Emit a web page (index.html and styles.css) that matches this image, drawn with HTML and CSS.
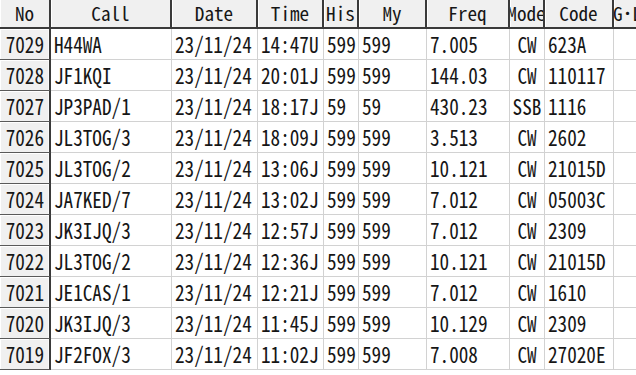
FILE: index.html
```html
<!DOCTYPE html>
<html lang="ja">
<head>
<meta charset="utf-8">
<title>Log</title>
<link rel="stylesheet" href="styles.css">
</head>
<body>
<div class="grid">
  <div class="th"><span>No</span></div><div class="th"><span>Call</span></div><div class="th"><span>Date</span></div><div class="th"><span>Time</span></div><div class="th"><span>His</span></div><div class="th"><span>My</span></div><div class="th"><span>Freq</span></div><div class="th clip"><span>Mode</span></div><div class="th"><span>Code</span></div><div class="th clip"><span>G･L</span></div>

  <div class="no"><span>7029</span></div><div class="td"><span>H44WA</span></div><div class="td"><span>23/11/24</span></div><div class="td"><span>14:47U</span></div><div class="td"><span>599</span></div><div class="td"><span>599</span></div><div class="td"><span>7.005</span></div><div class="td c"><span>CW</span></div><div class="td"><span>623A</span></div><div class="td"></div>
  <div class="no"><span>7028</span></div><div class="td"><span>JF1KQI</span></div><div class="td"><span>23/11/24</span></div><div class="td"><span>20:01J</span></div><div class="td"><span>599</span></div><div class="td"><span>599</span></div><div class="td"><span>144.03</span></div><div class="td c"><span>CW</span></div><div class="td"><span>110117</span></div><div class="td"></div>
  <div class="no"><span>7027</span></div><div class="td"><span>JP3PAD/1</span></div><div class="td"><span>23/11/24</span></div><div class="td"><span>18:17J</span></div><div class="td"><span>59</span></div><div class="td"><span>59</span></div><div class="td"><span>430.23</span></div><div class="td c"><span>SSB</span></div><div class="td"><span>1116</span></div><div class="td"></div>
  <div class="no"><span>7026</span></div><div class="td"><span>JL3TOG/3</span></div><div class="td"><span>23/11/24</span></div><div class="td"><span>18:09J</span></div><div class="td"><span>599</span></div><div class="td"><span>599</span></div><div class="td"><span>3.513</span></div><div class="td c"><span>CW</span></div><div class="td"><span>2602</span></div><div class="td"></div>
  <div class="no"><span>7025</span></div><div class="td"><span>JL3TOG/2</span></div><div class="td"><span>23/11/24</span></div><div class="td"><span>13:06J</span></div><div class="td"><span>599</span></div><div class="td"><span>599</span></div><div class="td"><span>10.121</span></div><div class="td c"><span>CW</span></div><div class="td"><span>21015D</span></div><div class="td"></div>
  <div class="no"><span>7024</span></div><div class="td"><span>JA7KED/7</span></div><div class="td"><span>23/11/24</span></div><div class="td"><span>13:02J</span></div><div class="td"><span>599</span></div><div class="td"><span>599</span></div><div class="td"><span>7.012</span></div><div class="td c"><span>CW</span></div><div class="td"><span>05003C</span></div><div class="td"></div>
  <div class="no"><span>7023</span></div><div class="td"><span>JK3IJQ/3</span></div><div class="td"><span>23/11/24</span></div><div class="td"><span>12:57J</span></div><div class="td"><span>599</span></div><div class="td"><span>599</span></div><div class="td"><span>7.012</span></div><div class="td c"><span>CW</span></div><div class="td"><span>2309</span></div><div class="td"></div>
  <div class="no"><span>7022</span></div><div class="td"><span>JL3TOG/2</span></div><div class="td"><span>23/11/24</span></div><div class="td"><span>12:36J</span></div><div class="td"><span>599</span></div><div class="td"><span>599</span></div><div class="td"><span>10.121</span></div><div class="td c"><span>CW</span></div><div class="td"><span>21015D</span></div><div class="td"></div>
  <div class="no"><span>7021</span></div><div class="td"><span>JE1CAS/1</span></div><div class="td"><span>23/11/24</span></div><div class="td"><span>12:21J</span></div><div class="td"><span>599</span></div><div class="td"><span>599</span></div><div class="td"><span>7.012</span></div><div class="td c"><span>CW</span></div><div class="td"><span>1610</span></div><div class="td"></div>
  <div class="no"><span>7020</span></div><div class="td"><span>JK3IJQ/3</span></div><div class="td"><span>23/11/24</span></div><div class="td"><span>11:45J</span></div><div class="td"><span>599</span></div><div class="td"><span>599</span></div><div class="td"><span>10.129</span></div><div class="td c"><span>CW</span></div><div class="td"><span>2309</span></div><div class="td"></div>
  <div class="no"><span>7019</span></div><div class="td"><span>JF2FOX/3</span></div><div class="td"><span>23/11/24</span></div><div class="td"><span>11:02J</span></div><div class="td"><span>599</span></div><div class="td"><span>599</span></div><div class="td"><span>7.008</span></div><div class="td c"><span>CW</span></div><div class="td"><span>27020E</span></div><div class="td"></div>
</div>
</body>
</html>
```

FILE: styles.css
```css
html, body {
  margin: 0;
  padding: 0;
  background: #ffffff;
  overflow: hidden;
}

.grid {
  display: grid;
  grid-template-columns: 51px 121px 86px 66px 35px 68px 83px 35px 69px 29px;
  grid-template-rows: 29px repeat(11, 31px);
  width: 643px;
  font-family: "Noto Sans Mono CJK JP", "Liberation Mono", "Noto Sans CJK JP", monospace;
  font-size: 19.2px;
  color: #161616;
}

.grid > div {
  box-sizing: border-box;
  display: flex;
  align-items: center;
  overflow: hidden;
  white-space: nowrap;
  min-width: 0;
}

.grid span {
  display: inline-block;
  flex: none;
  line-height: 1.2;
  transform: scaleY(1.14);
}

.grid > .th {
  background: #f0f0f0;
  border-right: 2px solid #3a3a3a;
  border-bottom: 2px solid #3a3a3a;
  justify-content: center;
  box-shadow: inset 1px 0 #ffffff;
  overflow: visible;
}

.grid > .th.clip {
  overflow: hidden;
}

.th span {
  line-height: 1.1;
  transform: none;
}

.no {
  background: #f0f0f0;
  border-right: 2px solid #3a3a3a;
  border-bottom: 1px solid #5a5a5a;
  justify-content: flex-end;
  padding-right: 5px;
  padding-top: 1px;
  box-shadow: inset 1px 1px #ffffff, inset -1px 0 #fafafa;
}

.td {
  background: #ffffff;
  border-right: 1px solid #d2d2d2;
  border-bottom: 1px solid #d2d2d2;
  padding-left: 3px;
  padding-top: 1px;
}

.td.c {
  justify-content: center;
  padding-left: 0;
}
```
